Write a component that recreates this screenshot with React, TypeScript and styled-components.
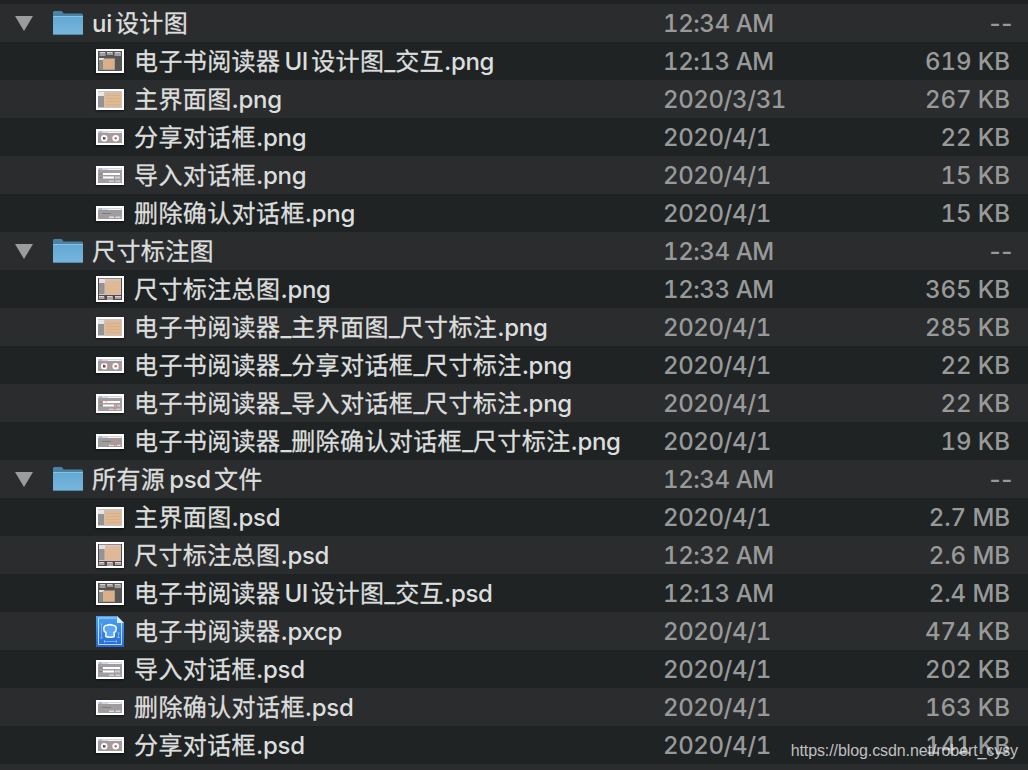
import styled, { createGlobalStyle } from "styled-components";

type ThumbKind = "overview" | "main" | "share" | "import" | "remove" | "sizes";
type Icon = ThumbKind | "folder" | "pxcp";

interface FileItem {
    name: string;
    date: string;
    size: string;
    icon: Icon;
    marked?: boolean;
};

const files: FileItem[] = [
    { name: "ui设计图", date: "12:34 AM", size: "--", icon: "folder" },
    { name: "电子书阅读器UI设计图_交互.png", date: "12:13 AM", size: "619 KB", icon: "overview" },
    { name: "主界面图.png", date: "2020/3/31", size: "267 KB", icon: "main" },
    { name: "分享对话框.png", date: "2020/4/1", size: "22 KB", icon: "share" },
    { name: "导入对话框.png", date: "2020/4/1", size: "15 KB", icon: "import" },
    { name: "删除确认对话框.png", date: "2020/4/1", size: "15 KB", icon: "remove" },
    { name: "尺寸标注图", date: "12:34 AM", size: "--", icon: "folder" },
    { name: "尺寸标注总图.png", date: "12:33 AM", size: "365 KB", icon: "sizes" },
    { name: "电子书阅读器_主界面图_尺寸标注.png", date: "2020/4/1", size: "285 KB", icon: "main" },
    { name: "电子书阅读器_分享对话框_尺寸标注.png", date: "2020/4/1", size: "22 KB", icon: "share", marked: true },
    { name: "电子书阅读器_导入对话框_尺寸标注.png", date: "2020/4/1", size: "22 KB", icon: "import", marked: true },
    { name: "电子书阅读器_删除确认对话框_尺寸标注.png", date: "2020/4/1", size: "19 KB", icon: "remove", marked: true },
    { name: "所有源psd文件", date: "12:34 AM", size: "--", icon: "folder" },
    { name: "主界面图.psd", date: "2020/4/1", size: "2.7 MB", icon: "main" },
    { name: "尺寸标注总图.psd", date: "12:32 AM", size: "2.6 MB", icon: "sizes" },
    { name: "电子书阅读器UI设计图_交互.psd", date: "12:13 AM", size: "2.4 MB", icon: "overview" },
    { name: "电子书阅读器.pxcp", date: "2020/4/1", size: "474 KB", icon: "pxcp" },
    { name: "导入对话框.psd", date: "2020/4/1", size: "202 KB", icon: "import" },
    { name: "删除确认对话框.psd", date: "2020/4/1", size: "163 KB", icon: "remove" },
    { name: "分享对话框.psd", date: "2020/4/1", size: "141 KB", icon: "share" },
];

const GlobalStyle = createGlobalStyle`
    body {
        margin: 0;
        background: #1f2324;
        overflow: hidden;
    }
`;

const Window = styled.div`
    position: relative;
    box-sizing: border-box;
    width: 1028px;
    height: 770px;
    padding-top: 4px;
    overflow: hidden;
    background: #1f2324;
    font-family: Inter, "Noto Sans CJK SC", sans-serif;
    font-size: 24px;
    line-height: 40px;
    white-space: nowrap;
`;

const Row = styled.div`
    display: grid;
    grid-template-columns: 663px 1fr 150px;
    box-sizing: border-box;
    height: 38px;
    padding-right: 18px;
    background: #1f2324;

    &:nth-child(odd) {
        background: #2b2c2e;
    }
`;

const NameCell = styled.div<{ $nested: boolean }>`
    display: flex;
    align-items: center;
    height: 38px;
    padding-left: ${(props) => (props.$nested ? "96px" : "15px")};
`;

const Name = styled.span<{ $nested: boolean }>`
    display: flex;
    height: 38px;
    margin-left: ${(props) => (props.$nested ? "10px" : "9px")};
    color: #dcdedd;
`;

const Han = styled.span`
    font-family: "Noto Sans CJK SC", sans-serif;
    letter-spacing: 0.4px;
    line-height: 36px;
    -webkit-text-stroke: 0.3px #dcdedd;
`;

const Latin = styled.span<{ $spaced: boolean }>`
    letter-spacing: -0.3px;
    font-weight: 450;
    padding: ${(props) => (props.$spaced ? "0 3px 0 4px" : "0")};

    &:first-child {
        padding-left: 0;
    }
`;

const Meta = styled.div`
    color: #989a99;
    font-weight: 450;
    font-variant-numeric: tabular-nums;
`;

const DateCell = styled(Meta)`
    letter-spacing: -0.4px;
`;

const SizeCell = styled(Meta)<{ $empty: boolean }>`
    font-variant-numeric: ${(props) => (props.$empty ? "normal" : "tabular-nums")};
    letter-spacing: ${(props) => (props.$empty ? "0.6px" : "-0.05px")};
    margin-right: ${(props) => (props.$empty ? "-3px" : "0")};
    text-align: right;
`;

const Thumb = styled.svg`
    display: block;
    flex: none;
    background: #fff;
    box-shadow: 0 1px 2px rgba(0, 0, 0, 0.6);
`;

const Glyph = styled.svg<{ $gap?: string }>`
    display: block;
    flex: none;
    margin-right: ${(props) => props.$gap || "0"};
`;

const Watermark = styled.div`
    position: absolute;
    right: 10px;
    bottom: 10px;
    color: rgba(255, 255, 255, 0.72);
    font-family: "Liberation Sans", sans-serif;
    font-size: 16px;
    letter-spacing: -0.09px;
    line-height: 18px;
`;

const heights: Record<ThumbKind, number> = {
    overview: 24,
    main: 21,
    share: 16,
    import: 19,
    remove: 15,
    sizes: 26,
};

const DialogTop = () => (
    <>
        <rect x="2" y="2" width="24" height="2" fill="#d5d3df" />
        <rect x="3" y="2" width="3" height="2" fill="#a9b9ee" />
        <rect x="12" y="3" width="13" height="1" fill="#f4f4f6" />
    </>
);

const art: Record<ThumbKind, React.ReactNode> = {
    overview: (
        <>
            <rect x="2" y="2" width="24" height="20" fill="#555556" />
            <path d="M3.5 3h6v4h-6zM11 3h6v3h-6zM18.5 3h6.500v4h-6.500z" fill="#a39c9e" />
            <path d="M4 3h5v1h-5zM11 3h5v1h-5zM19 3h5v1h-5z" fill="#d3cfd2" />
            <rect x="3" y="9" width="16" height="12" fill="#898a8b" />
            <rect x="3" y="9" width="5" height="2" fill="#dedfe0" />
            <rect x="7" y="10" width="11.500" height="10.500" fill="#dcb087" />
        </>
    ),
    main: (
        <>
            <rect x="2" y="2" width="24" height="17" fill="#c9c3c0" />
            <rect x="2" y="3" width="6" height="4" fill="#e6e6e8" />
            <rect x="2" y="7" width="6" height="11" fill="#939393" />
            <rect x="8.500" y="4" width="17" height="14" fill="#dfb894" />
            <path d="M10 6.500h14M10 9.500h14M10 12.500h14M10 15.500h14" stroke="#d3a981" strokeWidth=".6" />
        </>
    ),
    share: (
        <>
            <rect x="2" y="2" width="24" height="12" fill="#a29c9c" />
            <DialogTop />
            <circle cx="8.200" cy="9.300" r="3.300" fill="#fff" />
            <circle cx="19.700" cy="9.300" r="3.300" fill="#fff" />
            <rect x="7" y="8" width="2.500" height="2.500" fill="#54484d" />
            <rect x="8" y="8" width="1" height="1" fill="#d34f42" />
            <circle cx="19.700" cy="9.300" r="1.200" fill="#dc5962" />
        </>
    ),
    import: (
        <>
            <rect x="2" y="2" width="24" height="15" fill="#a29e9f" />
            <DialogTop />
            <path d="M7 7h17v2h-17zM7 10.500h11v2h-11z" fill="#fff" />
            <path d="M3.500 8h2.500M3.500 11.500h2.500" stroke="#777475" strokeWidth=".8" />
            <path d="M19 10.500h5v2h-5zM13 14.500h5v1.500h-5zM19.500 14.500h5v1.500h-5z" fill="#d2cfd2" />
        </>
    ),
    remove: (
        <>
            <rect x="2" y="2" width="24" height="11" fill="#a09d9e" />
            <DialogTop />
            <path d="M6 7.500h9" stroke="#777576" strokeWidth=".8" />
            <path d="M13 10.500h5v1.500h-5zM19.500 10.500h5v1.500h-5z" fill="#dedcdf" />
        </>
    ),
    sizes: (
        <>
            <rect x="2" y="2" width="24" height="22" fill="#53494e" />
            <rect x="3" y="2.500" width="22" height="16.500" fill="#d2c5c3" />
            <rect x="3" y="3" width="6" height="4" fill="#e5dfe4" />
            <rect x="3" y="7" width="5.500" height="11" fill="#949293" />
            <rect x="9" y="4.500" width="15.500" height="14" fill="#dfb996" />
            <path d="M3 20.500h5.500v2.500h-5.500zM11 20h6v4h-6zM19 20.500h6v2.500h-6z" fill="#a9a3a6" />
            <path d="M3 20h5v1h-5zM11 20h5v1h-5zM19 20h6v1h-6z" fill="#d8d2d7" />
        </>
    ),
};

const marks: Partial<Record<ThumbKind, string>> = {
    share: "M11.500 8v3M23 7v4M7 7h2",
    import: "M8 6.500h6M10 7v1.500M19 11h4M20.500 10v5M14 14h4",
    remove: "M17 5.500h5M17 6v1.500M14 10.500h9M20.500 9v3",
};

const Thumbnail = ({ kind, marked }: { kind: ThumbKind; marked?: boolean }) => (
    <Thumb width="28" height={heights[kind]} viewBox={`0 0 28 ${heights[kind]}`}>
        {art[kind]}
        {marked && <path d={marks[kind]} stroke="#d98288" strokeWidth=".8" fill="none" />}
    </Thumb>
);

const FolderIcon = () => (
    <>
        <Glyph width="18" height="15" viewBox="0 0 18 15" $gap="20px">
            <path d="M0 0h18L9 15z" fill="#9b9d9c" />
        </Glyph>
        <Glyph width="30" height="24" viewBox="0 0 30 24">
            <defs>
                <linearGradient id="folder" x1="0" y1="0" x2="0" y2="1">
                    <stop offset="0" stopColor="#62a8d4" />
                    <stop offset="1" stopColor="#78b6da" />
                </linearGradient>
            </defs>
            <path d="M0 23V1.500Q0 0 1.500 0H8q1.200 0 1.800 1l.6 1.500H28.500Q30 2.500 30 4V23z" fill="#4b81a3" />
            <path d="M0 5h30v17.500q0 1.500-1.500 1.500h-27Q0 24 0 22.500z" fill="url(#folder)" />
            <path d="M0 5.500h30" stroke="#86c2e3" />
            <path d="M.5 23.500h29" stroke="#4e8db4" />
        </Glyph>
    </>
);

const PxcpIcon = () => (
    <Glyph width="28" height="31" viewBox="0 0 28 31">
        <defs>
            <linearGradient id="doc" x1="0" y1="0" x2="0" y2="1">
                <stop offset="0" stopColor="#4ba3f0" />
                <stop offset="1" stopColor="#2566d8" />
            </linearGradient>
        </defs>
        <path d="M0 0h21l7 7v24H0z" fill="url(#doc)" />
        <path d="M20.500 2H2.500v26.500h23V7" fill="none" stroke="#b5dcfb" strokeWidth="1" />
        <path d="M21 0v7h7z" fill="#d9effd" />
        <path d="M9.800 20.500l.2-4q-2.300-1-2.300-3.500c0-2.700 1.800-3.800 3.500-3.800 1.300-.8 4.300-.8 5.600 0 1.700 0 3.500 1.100 3.500 3.800q0 2.500-2.300 3.500l.2 4q-4.200 1.600-8.400 0z" fill="#5da6f4" stroke="#f2f9ff" strokeWidth="1.600" strokeLinejoin="round" />
        <path d="M5.500 8v14M4 8h3M4 22h3M22.500 17v4.500M21 17h3M21 21.500h3M8.500 25.500h12M8.500 24v3M20.500 24v3" stroke="#85bafa" strokeWidth=".8" fill="none" />
    </Glyph>
);

// names mix scripts, every run gets its own font
const FileName = ({ name, nested }: { name: string; nested: boolean }) => (
    <Name $nested={nested}>
        {name.match(/[\x00-\x7f]+|[^\x00-\x7f]+/g)!.map((run, i) =>
            run.charCodeAt(0) > 127
                ? <Han key={i}>{run}</Han>
                : <Latin key={i} $spaced={/^(ui|psd)$/i.test(run)}>{run}</Latin>
        )}
    </Name>
);

const FileIcon = ({ icon, marked }: { icon: Icon; marked?: boolean }) => {
    if (icon === "folder") return <FolderIcon />;
    if (icon === "pxcp") return <PxcpIcon />;
    return <Thumbnail kind={icon} marked={marked} />;
};

const App = () => {
    return (
        <>
        <GlobalStyle />
        <Window>
            {files.map((file) => {
                const nested = file.icon !== "folder";
                return (
                    <Row key={file.name}>
                        <NameCell $nested={nested}>
                            <FileIcon icon={file.icon} marked={file.marked} />
                            <FileName name={file.name} nested={nested} />
                        </NameCell>
                        <DateCell>{file.date}</DateCell>
                        <SizeCell $empty={!nested}>{file.size}</SizeCell>
                    </Row>
                );
            })}
            <Row />
            <Watermark>https://blog.csdn.net/robert_cysy</Watermark>
        </Window>
        </>
    );
};

export default App;
